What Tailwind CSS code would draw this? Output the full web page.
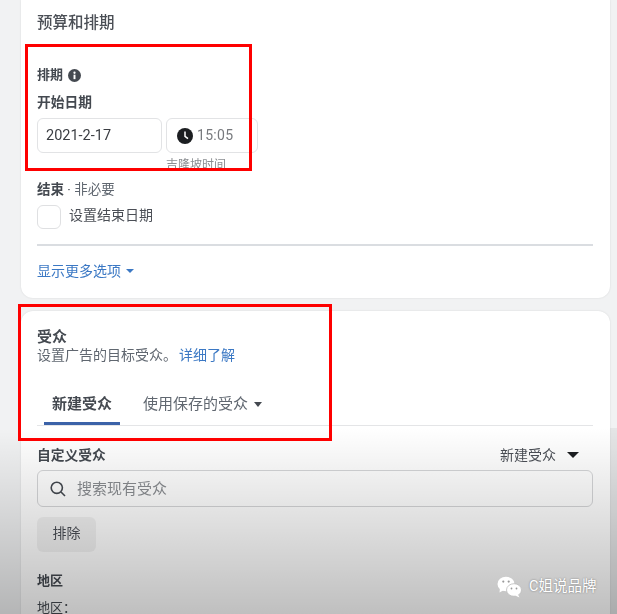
<!DOCTYPE html>
<html lang="zh-CN">
<head>
    <meta charset="UTF-8">
    <meta name="viewport" content="width=device-width, initial-scale=1.0">
    <title>预算和排期</title>
    <script src="https://cdn.jsdelivr.net/npm/@tailwindcss/browser@4"></script>
</head>
<body class="bg-[#f1f2f3]">
<div class="relative w-[617px] h-[614px] overflow-hidden font-['Roboto','Noto_Sans_CJK_SC',sans-serif] text-[#444950] bg-[#f1f2f3] pl-[21px] pr-[7px]">

    <!-- budget card -->
    <section class="h-[298px] bg-white rounded-b-xl pl-4 pr-[17px] pt-[13px] shadow-[0_0_2px_rgba(0,0,0,0.12)] blur-[0.4px]">
        <h2 class="text-[15.5px] leading-5 font-medium text-[#4b4f56]">预算和排期</h2>
        <div class="flex items-center gap-[5px] mt-[34px] h-4">
            <span class="text-[13px] leading-4 font-bold">排期</span>
            <svg class="w-[13px] h-[13px]" viewBox="0 0 16 16"><circle cx="8" cy="8" r="8" fill="#444950"/><rect x="6.8" y="7" width="2.4" height="5.5" fill="#fff"/><circle cx="8" cy="4.6" r="1.4" fill="#fff"/></svg>
        </div>
        <div class="text-[13.75px] leading-4 font-bold mt-[11px]">开始日期</div>
        <div class="flex gap-[4px] mt-[8px]">
            <div class="w-[125px] h-[35px] border border-[#e2e3e5] rounded-md pl-[8px] flex items-center text-[14.5px] text-[#3a3d42]">2021-2-17</div>
            <div class="w-[92px] h-[35px] border border-[#e2e3e5] rounded-md pl-[10px] flex items-center gap-[4px] text-[14px] text-[#77797d] tracking-[0.3px]">
                <svg class="w-4 h-4" viewBox="0 0 16 16"><circle cx="8" cy="8" r="8" fill="#1c1e21"/><path d="M8 3.5V8.3L11 10.6" fill="none" stroke="#fff" stroke-width="1.5"/></svg>
                <span>15:05</span>
            </div>
        </div>
        <div class="ml-[129px] text-[12px] leading-4 mt-[4px] text-[#8a8d91]">吉隆坡时间</div>
        <div class="text-[13.5px] leading-4 mt-[8px]"><span class="font-bold">结束</span> · <span class="text-[#606770]">非必要</span></div>
        <label class="flex items-center gap-2 mt-[8px]">
            <span class="w-6 h-6 border border-[#dfe0e2] rounded-md"></span>
            <span class="pb-[3px] text-[14px] text-[#4b4f56]">设置结束日期</span>
        </label>
        <div class="h-[2px] bg-[#dadde1] mt-[15px]"></div>
        <a class="flex items-center gap-[5px] mt-[17px] text-[14px] leading-4 text-[#3b78c4]">显示更多选项
            <span class="w-0 h-0 border-x-[4px] border-x-transparent border-t-[4px] border-t-[#3b78c4]"></span>
        </a>
    </section>

    <!-- audience card -->
    <section class="h-[320px] mt-[13px] bg-white rounded-t-xl pl-4 pr-[17px] pt-[17px] shadow-[0_0_2px_rgba(0,0,0,0.12)] blur-[0.4px]">
        <h2 class="text-[15px] leading-[18px] font-bold">受众</h2>
        <p class="text-[14px] leading-4 mt-[1px] text-[#606770]">设置广告的目标受众。<a class="ml-[2px] text-[#3b78c4]">详细了解</a></p>

        <div class="flex items-end h-[47px] mt-[16px] border-b border-[#e4e5e7] pl-[7px]">
            <div class="w-[76px] h-[46px] flex items-center justify-center pt-[7px] border-b-[3px] border-[#3b62a8] text-[15px] font-bold">新建受众</div>
            <div class="ml-[23px] h-[46px] flex items-center gap-[6px] pt-[7px] pb-[3px] text-[15px] text-[#606770]">使用保存的受众
                <span class="w-0 h-0 border-x-[4.5px] border-x-transparent border-t-[5px] border-t-[#444950]"></span>
            </div>
        </div>

        <div class="flex justify-between items-center mt-[21px] h-4">
            <span class="text-[13.75px] leading-4 font-bold">自定义受众</span>
            <span class="flex items-center gap-[11px] pr-[14px] text-[14px] text-[#4b4f56]">新建受众
                <span class="w-0 h-0 border-x-[6px] border-x-transparent border-t-[6px] border-t-[#1c1e21]"></span>
            </span>
        </div>
        <div class="h-[37px] mt-[7px] border border-[#d5d6d8] rounded-md flex items-center gap-[11px] pl-3">
            <svg class="w-4 h-4" viewBox="0 0 16 16" fill="none" stroke="#444950" stroke-width="1.6"><circle cx="6.8" cy="6.8" r="5.6"/><path d="M11 11L15 15"/></svg>
            <span class="pt-[2px] text-[15px] text-[#8a8d91]">搜索现有受众</span>
        </div>
        <button class="block w-[59px] h-[35px] mt-[10px] pb-[2px] bg-black/5 rounded-md text-[14px] text-[#4b4f56]">排除</button>
        <div class="text-[13px] leading-4 font-bold mt-[21px]">地区</div>
        <div class="text-[13px] leading-4 mt-[11px]">地区：</div>
    </section>

    <!-- video fade over the lower half -->
    <div class="absolute left-0 right-0 top-[428px] bottom-0 pointer-events-none bg-linear-to-b from-black/0 to-black/25"></div>
    <div class="absolute right-0 top-[428px] bottom-0 w-[7px] bg-black/5"></div>

    <!-- red annotation boxes -->
    <div class="absolute left-[25px] top-[44px] w-[227px] h-[127px] border-[3px] border-[#fe0000]"></div>
    <div class="absolute left-[18px] top-[304px] w-[314px] h-[137px] border-[3px] border-[#fe0000]"></div>

    <!-- watermark -->
    <div class="absolute left-[497px] top-[576px] flex items-center gap-[7px] text-white text-[14.5px] [text-shadow:0_0_2px_rgba(0,0,0,0.45)]">
        <svg class="w-[25px] h-[22px]" viewBox="0 0 25 22">
            <ellipse cx="9" cy="8" rx="8.5" ry="7.3" fill="#fff"/>
            <path d="M3 12L2.5 16.5L7 14Z" fill="#fff"/>
            <ellipse cx="17" cy="14" rx="7.5" ry="6.3" fill="#fff" stroke="#bbb" stroke-width="0.8"/>
            <path d="M21 18.5L22.5 21.5L18 19.5Z" fill="#fff"/>
            <circle cx="6.3" cy="5.6" r="1.1" fill="#999"/><circle cx="11.7" cy="5.6" r="1.1" fill="#999"/>
            <circle cx="14.5" cy="12.5" r="0.9" fill="#999"/><circle cx="19.5" cy="12.5" r="0.9" fill="#999"/>
        </svg>
        <span>C姐说品牌</span>
    </div>
</div>
</body>
</html>
